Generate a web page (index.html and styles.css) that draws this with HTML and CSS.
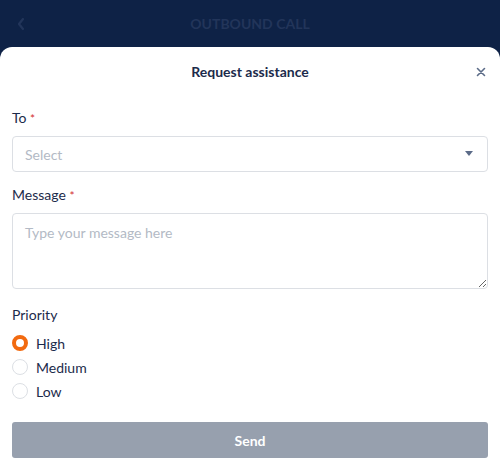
FILE: index.html
```html
<!DOCTYPE html>
<html>
<head>
<meta charset="utf-8">
<link rel="stylesheet" href="styles.css">
</head>
<body>
<div class="topbar">
  <svg class="back" width="10" height="14" viewBox="0 0 10 14"><path d="M7 2 L3 7 L7 12" fill="none" stroke="currentColor" stroke-width="2.2" stroke-linecap="round" stroke-linejoin="round"/></svg>
  <div class="topbar-title">OUTBOUND CALL</div>
</div>
<div class="sheet">
  <div class="sheet-head">
    <div class="sheet-title">Request assistance</div>
    <svg class="close" width="10" height="10" viewBox="0 0 10 10"><path d="M1.5 1.5 L8.5 8.5 M8.5 1.5 L1.5 8.5" stroke="currentColor" stroke-width="1.6" stroke-linecap="round"/></svg>
  </div>
  <div class="field first">
    <div class="label">To <span class="req">*</span></div>
    <div class="select">
      <span class="placeholder">Select</span>
      <svg class="caret" width="8" height="5" viewBox="0 0 8 5"><path d="M0 0 H8 L4 5 Z" fill="currentColor"/></svg>
    </div>
  </div>
  <div class="field">
    <div class="label">Message <span class="req">*</span></div>
    <textarea class="textarea" placeholder="Type your message here"></textarea>
  </div>
  <div class="field priority">
    <div class="label">Priority</div>
    <div class="radios">
      <div class="radio-row"><span class="radio checked"></span><span>High</span></div>
      <div class="radio-row"><span class="radio"></span><span>Medium</span></div>
      <div class="radio-row"><span class="radio"></span><span>Low</span></div>
    </div>
  </div>
  <div class="send">Send</div>
</div>
</body>
</html>
```
FILE: styles.css
```css
* { box-sizing: border-box; }
html, body { margin: 0; padding: 0; }
body {
  width: 500px;
  height: 467px;
  overflow: hidden;
  background: #0e2246;
  font-family: Lato, "Noto Sans", sans-serif;
  color: #1c2b4b;
}
.topbar {
  height: 47px;
  display: flex;
  align-items: center;
  justify-content: center;
  position: relative;
  color: #22355a;
}
.back {
  position: absolute;
  left: 16px;
  top: 17px;
}
.topbar-title {
  font-size: 14px;
  font-weight: 700;
  letter-spacing: 0;
}
.sheet {
  background: #fff;
  border-radius: 12px 12px 0 0;
  height: 420px;
  padding: 0 12px;
  display: flex;
  flex-direction: column;
}
.sheet-head {
  height: 49px;
  display: flex;
  align-items: center;
  justify-content: center;
  position: relative;
}
.sheet-title {
  font-size: 14px;
  font-weight: 700;
  color: #1c2b4b;
}
.close {
  position: absolute;
  right: 2px;
  top: 20px;
  color: #5c6c88;
}
.field {
  margin-top: 13px;
  display: flex;
  flex-direction: column;
  gap: 7px;
}
.field.first { margin-top: 12px; }
.label {
  font-size: 14px;
  line-height: 20px;
  color: #1c2b4b;
}
.req {
  color: #d3302f;
  font-size: 12px;
}
.select {
  height: 36px;
  border: 1px solid #dcdfe4;
  border-radius: 4px;
  display: flex;
  align-items: center;
  justify-content: space-between;
  padding: 0 14px 0 12px;
}
.placeholder {
  font-size: 14px;
  color: #b3bac5;
}
.caret { color: #5b6b88; margin-top: -1px; }
.textarea {
  height: 76px;
  border: 1px solid #dcdfe4;
  border-radius: 4px;
  padding: 10px 12px;
  font-family: Lato, "Noto Sans", sans-serif;
  font-size: 14px;
  resize: vertical;
  outline: none;
  display: block;
  width: 100%;
}
.textarea::placeholder { color: #b3bac5; }
.priority { margin-top: 16px; gap: 6px; }
.radios { display: flex; flex-direction: column; }
.radio-row {
  height: 24px;
  display: flex;
  align-items: center;
  gap: 8px;
  font-size: 14px;
  color: #1c2b4b;
}
.radio {
  width: 16px;
  height: 16px;
  border-radius: 50%;
  border: 1px solid #dcdfe4;
  background: #fff;
}
.radio.checked {
  border: 4.5px solid #f26a10;
}
.send {
  margin-top: 19px;
  height: 36px;
  border-radius: 3px;
  background: #97a0ae;
  color: #fff;
  font-size: 14px;
  font-weight: 700;
  display: flex;
  align-items: center;
  justify-content: center;
}
```
